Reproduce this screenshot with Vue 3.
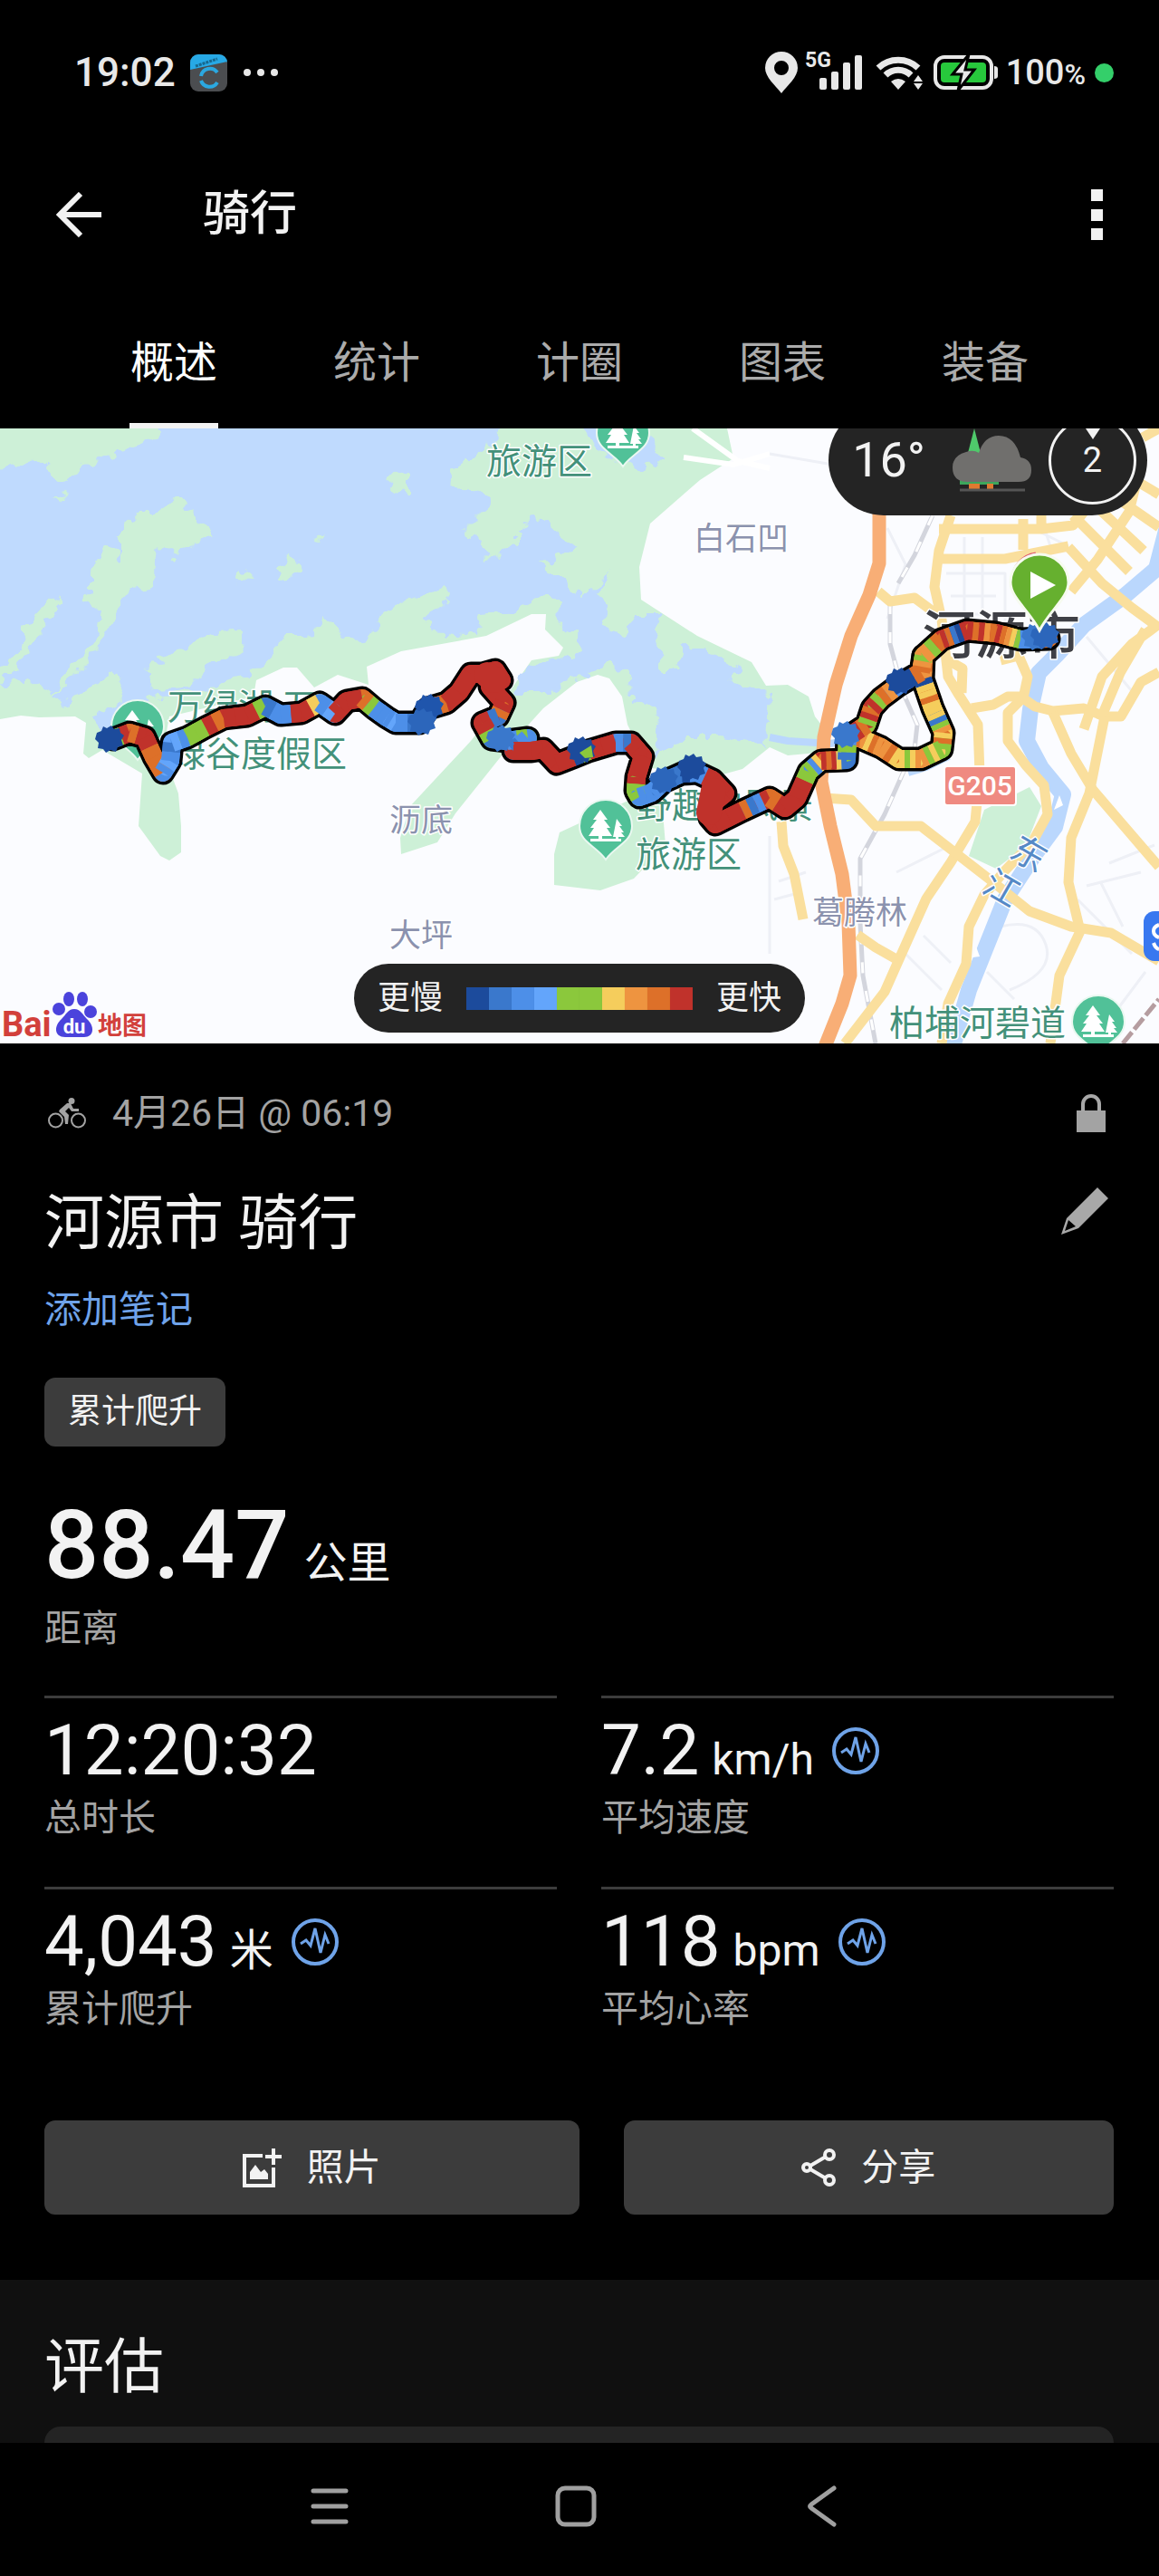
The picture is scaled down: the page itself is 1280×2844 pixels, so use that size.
<template>
  <div class="screen">
    <div class="status-bar">
      <span class="clock">19:02</span>
      <svg class="app-badge" viewBox="0 0 41 41" aria-hidden="true">
        <rect width="41" height="41" rx="9" fill="#4b4d50" />
        <path d="M0 17V9a9 9 0 0 1 9-9h23a9 9 0 0 1 9 9v-1z" fill="#27a9e6" />
        <path d="M6 13 30 5" stroke="#17688f" stroke-width="3" stroke-dasharray="3 1" />
        <path d="M30 20a10 10 0 0 0-18 4M12 29a10 10 0 0 0 18 2" fill="none" stroke="#2ba8e0" stroke-width="4" />
      </svg>
      <svg class="more-dots" viewBox="0 0 38 8" aria-hidden="true">
        <circle cx="4" cy="4" r="4" /><circle cx="19" cy="4" r="4" /><circle cx="34" cy="4" r="4" />
      </svg>
      <div class="status-icons">
        <svg class="icon-pin" viewBox="0 0 36 46" aria-hidden="true">
          <path fill-rule="evenodd" d="M18 0a18 18 0 0 1 18 18c0 10-11 19-18 28C11 37 0 28 0 18A18 18 0 0 1 18 0zm0 10a8 8 0 1 0 0 16 8 8 0 0 0 0-16z" />
        </svg>
        <svg class="icon-signal" viewBox="0 -8 66 60" aria-hidden="true">
          <text x="0" y="16" class="network">5G</text>
          <rect x="16" y="28" width="8" height="13" rx="2" /><rect x="29" y="21" width="8" height="20" rx="2" />
          <rect x="42" y="11" width="8" height="30" rx="2" /><rect x="55" y="3" width="8" height="38" rx="2" />
        </svg>
        <svg class="icon-wifi" viewBox="0 0 52 38" aria-hidden="true">
          <path d="M3 14a32 32 0 0 1 44 0M11 22a20 20 0 0 1 28 0" fill="none" stroke="#e8e8e8" stroke-width="7" />
          <path d="M25 38l-8-9q8-6 16 0zM47 22l5 7H42zM47 38l5-7H42z" />
        </svg>
        <svg class="icon-battery" viewBox="0 0 71 40" aria-hidden="true">
          <rect x="2" y="3" width="62" height="34" rx="10" fill="none" stroke="#e8e8e8" stroke-width="4" />
          <rect x="8" y="9" width="50" height="22" rx="4" fill="#27c93c" />
          <path d="M67 13q4 0 4 3v8q0 3-4 3z" />
          <path d="M39 0 21 22h10l-4 18 18-23H35z" stroke="#000" stroke-width="3" />
        </svg>
        <span class="charge">100<small>%</small></span>
        <span class="live-dot"></span>
      </div>
    </div>

    <header class="app-bar">
      <button class="icon-button" type="button" aria-label="返回">
        <svg class="arrow" viewBox="0 0 50 50"><path d="M27 2 4 25l23 23M4 25h46" fill="none" stroke="#f2f2f2" stroke-width="6" /></svg>
      </button>
      <h1>骑行</h1>
      <button class="icon-button menu" type="button" aria-label="菜单">
        <svg class="kebab" viewBox="0 0 13 56"><path d="M0 0h13v13H0zM0 22h13v13H0zM0 43h13v13H0z" /></svg>
      </button>
    </header>

    <nav class="tabs">
      <button
        v-for="tab in tabs"
        :key="tab"
        type="button"
        :class="['tab', { active: tab === activeTab }]"
        @click="activeTab = tab"
      ><span>{{ tab }}</span></button>
    </nav>

    <section class="map">
      <svg class="map-canvas" viewBox="0 0 1280 679" aria-hidden="true">
        <defs>
          <filter id="shore" x="-5%" y="-5%" width="110%" height="110%">
            <feTurbulence type="fractalNoise" baseFrequency="0.07" numOctaves="2" seed="4" />
            <feDisplacementMap in="SourceGraphic" scale="22" xChannelSelector="R" yChannelSelector="G" />
          </filter>
          <g id="trees">
            <path d="M-6-18l8 11h-4l7 9h-4l6 9H-19l6-9h-4l7-9h-4z" />
            <path d="M12-8l6 8h-3l5 7h-3l4 5H8z" />
            <path d="M-17 14h34v3h-34zM-8 10h4v5h-4zM11 10h3v5h-3z" />
          </g>
          <path id="drop" d="M0-29a29 29 0 0 1 29 29c0 18-19 22-29 37C-10 22-29 18-29 0A29 29 0 0 1 0-29z" />
        </defs>
        <rect width="1280" height="679" fill="#fbfcff" />

        <!-- land, reservoir and islands -->
        <path class="green" d="M0 0H803L810 33 773 57 718 105 706 153 708 189 770 229 830 258 846 284 870 283 893 296 900 318 907 327 903 358 870 361 850 352 820 376 787 385 720 375 700 341 693 327 687 296 673 276 660 272 637 280 600 309 563 350 503 425 483 457 443 470 442 452 453 417 520 345 563 290 587 256 617 251 622 242 602 222 603 205 587 205 537 229 443 246 405 263 407 283 373 272 347 286 328 264 313 264 283 278 280 296 187 318 182 345 187 376 197 403 200 439 200 468 187 477 177 472 153 439 157 381 113 355 98 364 92 359 95 325 83 318 43 319 23 317 0 321z" />
        <path class="green" d="M618 446 700 408 730 400 735 460 700 497 663 510 612 504 612 470z" />
        <g filter="url(#shore)">
          <path class="water" d="M-20 50 40 32 70 60 87 46 133 25 173 10 185-15H560L543 15 500 46 493 64 530 68 540 86 513 113 533 122 537 144 573 130 573 110 590 95 637 131 600 149 643 187 677 155 660 180 670 198 660 220 690 229 700 207 730 207 723 229 733 269 747 269 753 238 787 250 817 265 810 278 850 296 845 350 797 341 760 341 727 358 720 341 730 318 700 300 697 274 670 256 667 267 633 274 607 291 570 291 580 265 643 247 637 225 617 216 620 193 600 184 570 204 530 207 527 229 480 225 470 211 497 189 487 175 440 193 413 216 410 229 387 236 360 207 343 229 313 229 310 242 277 274 213 291 160 300 150 325 110 340 103 318 140 300 130 270 67 303 40 280-20 284z" />
          <path class="water" d="M640-10h50l30 25 10 24-25 5-45-20z" />
          <path class="green" d="M193 77 213 91 240 117 217 126 190 142 175 130 167 175 140 180 117 229 80 278 55 300 67 278 107 229 110 202 90 189 100 180 100 158 117 131 133 144 133 113 150 93 173 93z" />
          <path class="green" d="M63 180v18L43 229 17 265-10 290V270L13 251 33 216z" />
          <path class="green" d="M323 135 333 158 317 169 308 158zM343 124l12-6-4 8zM260 168l10-11 12 12zM425 55l28-8v26l-15-6zM63 73l10-4-3 8z" />
          <path class="green" d="M160 262 190 250 213 238 235 226 263 225 270 247 233 260 205 288 170 290z" />
        </g>
        <path d="M765 0 815 36 850 44M755 32l55 8 40-12" fill="none" stroke="#fff" stroke-width="6" />

        <!-- side streets -->
        <g class="lane">
          <path d="M850 28l70 12M980 110l20 40-20 60M1045 160h65v90M1050 185h50M1045 205h60M1065 120v100M1085 120v80M1200 505l60-15M1190 520l60 60M1215 500l25 50M860 500l30-10M855 520l30-8M1000 580l40 40M1020 560l30 30M1105 550q40-10 50 20t-40 50M1090 600l30 30M1235 640l30-40M990 490l60-30M850 450v130M1140 110l40 20M1140 70l20 60M1200 230l50 60M1225 480l50-20" />
        </g>
        <path class="green" d="M1137 396 1150 417 1133 461 1100 486 1070 472 1087 421z" />
        <g class="river">
          <path d="M1290 105 1277 155 1243 184 1197 217 1167 250 1147 270 1138 310 1134 345 1150 375 1174 404 1165 440 1140 474 1110 520 1090 570 1070 620 1050 690" />
          <path class="stream" d="M850 341 870 345 917 348 940 344M1003 380l20-6 25-12" />
        </g>
        <path d="M1170 405l-6 16 10-5zM1078 572l-4 12 8-1z" fill="#fff" />
        <g class="rail">
          <path d="M1030 96 1010 140 992 171M983 193V238L997 291 1013 327 1010 354 997 381 977 426 950 475V546L953 604 967 679" />
          <path class="ties" d="M1030 96 1010 140 992 171M983 193V238L997 291 1013 327 1010 354 997 381 977 426 950 475V546L953 604 967 679" />
        </g>
        <path d="M1240 679 1280 630" stroke="#b59da0" stroke-width="5" stroke-dasharray="16 4" />
        <g class="road">
          <path d="M1050 96 1037 135 1032 175 1040 211 1047 274 1057 291 1080 327 1082 381 1077 434 1050 479 1023 519 997 577 977 622 933 679" />
          <path d="M910 408 940 410 967 439 1017 439 1057 470 1097 501 1137 533 1183 550 1227 557 1280 588" />
          <path d="M970 180 983 191 1010 187 1037 207M1047 256 1063 265 1062 292M1105 256l20-5 10 23-5 24" />
          <path d="M1073 309 1097 305 1113 296 1127 296 1143 307 1163 312 1197 309 1220 318 1238 318 1260 280 1280 269" />
          <path d="M1163 314 1183 359 1207 399 1237 434 1280 484" />
          <path d="M1280 216 1250 238 1217 274 1197 332M1265 222l-28 48-22 52" />
          <path d="M1220 318 1203 403 1183 452 1180 501 1193 555 1170 604 1160 679" />
          <path d="M1127 300 1113 314V345L1133 372 1153 394 1157 426 1140 457 1110 488 1087 515 1070 550 1067 591 1047 635 1040 679" />
          <path d="M863 434 865 461 877 492 887 542M947 559 967 573 990 586" />
          <path d="M1037 111H1150L1185 107 1215 70 1250 52M1037 144H1110L1180 130M1130 100v34M1150 96v16" />
          <path d="M1185 96 1247 158M1200 76 1263 135M1215 64l65 45M1183 180 1212 145 1247 92 1255 60M1180 131 1217 171 1250 198 1280 220M1250 55l30 18M1262 10l18-10" />
        </g>
        <path class="highway" d="M971 60V149L960 184 940 229 923 283 910 341 907 390 917 439 930 492 937 546 939 604 930 635 908 690" />

        <!-- place names -->
        <g class="place park">
          <text x="537" y="50">旅游区</text>
          <text x="185" y="321">万绿湖-万</text>
          <text x="188" y="373">绿谷度假区</text>
          <text x="703" y="430">野趣沟风景</text>
          <text x="702" y="484">旅游区</text>
          <text x="982" y="670">柏埔河碧道</text>
        </g>
        <g class="place village">
          <text x="766" y="134">白石凹</text>
          <text x="430" y="445">沥底</text>
          <text x="430" y="572">大坪</text>
          <text x="897" y="547">葛腾林</text>
        </g>
        <text class="place city" x="1019" y="249">河源市</text>
        <g class="place stream-name">
          <text transform="translate(1137 470) rotate(30)" x="-20" y="14">东</text>
          <text transform="translate(1107 508) rotate(30)" x="-20" y="14">江</text>
        </g>
        <rect x="1043" y="373" width="79" height="43" rx="3" fill="#ef8a81" stroke="#fff" stroke-width="2" />
        <text class="road-sign" x="1082" y="405">G205</text>
        <rect x="1263" y="533" width="60" height="55" rx="12" fill="#3878f0" />
        <path d="M1280 548q-6 2-6 7t6 7M1274 568q2 6 6 7" fill="none" stroke="#fff" stroke-width="4" />

        <g v-for="poi in parks" :key="poi.x" :transform="`translate(${poi.x} ${poi.y})`">
          <use href="#drop" fill="#51c198" stroke="#e9f8f0" stroke-width="2" />
          <use href="#trees" fill="#fff" />
        </g>

        <!-- recorded track, coloured by speed: round joints first, crisp bands on top -->
        <g class="track">
          <polyline v-for="(line, i) in casings" :key="i" class="casing" :points="line" />
          <g v-for="layer in ['joints', 'bands']" :key="layer" :class="layer">
            <line
              v-for="(s, i) in segments"
              :key="i"
              :x1="s.x1" :y1="s.y1" :x2="s.x2" :y2="s.y2"
              :stroke="s.color"
            />
          </g>
        </g>
        <path d="M538 272l8 6M788 400l-5 24" fill="none" stroke="#c0322b" stroke-width="28" stroke-linecap="round" />
        <path
          v-for="stop in stops"
          :key="stop.x"
          :transform="`translate(${stop.x} ${stop.y})`"
          :fill="stop.color"
          d="M-14-7-9-9-7-14-3-12 2-15 5-11 11-12 12-7 16-4 13 1 15 7 9 9 7 14 1 12-4 15-7 11-13 10-12 4-16 0z"
        />
        <path d="M640 358l13-8 2 13-9 1z" fill="#8bc83c" />
        <path d="M1118 169a30 31 0 0 1 26-30" fill="none" stroke="#e0566b" stroke-width="5" />
        <path d="M1148 139a32 31 0 0 1 32 31c0 17-20 30-32 53-12-23-32-36-32-53a32 31 0 0 1 32-31z" fill="#66b02f" stroke="#f6fbef" stroke-width="3" />
        <path d="M1138 158v30l28-15z" fill="#fff" />

        <g class="provider">
          <text x="2" y="671" class="latin">Bai</text>
          <g fill="#4b43dc">
            <circle cx="65" cy="641" r="7" /><ellipse cx="76" cy="630" rx="6" ry="8" />
            <ellipse cx="91" cy="630" rx="6" ry="8" /><circle cx="100" cy="644" r="7" />
            <path d="M82 641c7 0 9 6 14 11 9 8 8 20-3 20H72c-12 0-13-12-4-20 5-5 7-11 14-11z" />
          </g>
          <text x="82" y="668" class="paw">du</text>
          <text x="108" y="669" class="hanzi">地图</text>
        </g>
      </svg>

      <div class="weather">
        <span class="temperature">16°</span>
        <svg class="cloud" viewBox="0 0 88 70" aria-hidden="true">
          <path d="M24 0 31 27H17z" fill="#4fc96b" />
          <path d="M8 56h43v6H8z" fill="#3da65c" /><path d="M18 61h12v6H18zM38 61h7v6h-7z" fill="#e07a30" />
          <path d="M15 26q8-3 14 1Q35 8 51 8q18 0 24 24 12 2 12 14 0 13-14 13H15Q0 58 0 43q0-13 15-17z" fill="#706f6d" />
          <path d="M8 68h72" stroke="#555" stroke-width="3" />
        </svg>
        <span class="wind">2</span>
      </div>

      <div class="legend">
        <span>更慢</span>
        <div class="scale">
          <i v-for="(color, i) in scale" :key="i" :style="{ background: color }"></i>
        </div>
        <span>更快</span>
      </div>
    </section>

    <main class="summary">
      <div class="meta">
        <svg class="icon-bike" viewBox="0 0 42 34" aria-hidden="true">
          <circle cx="8.5" cy="25" r="7.5" fill="none" stroke="#a3a3a3" stroke-width="2" />
          <circle cx="33.5" cy="25" r="7.5" fill="none" stroke="#a3a3a3" stroke-width="2" />
          <circle cx="26" cy="3.5" r="3.5" />
          <path d="M13 13 21 6h4l3 6h6v3h-8l-3-4-4 4 4 4-1 10h-3l-1-8-6-6z" />
        </svg>
        <span>4月26日 @ 06:19</span>
        <svg class="icon-lock" viewBox="0 0 32 42" aria-hidden="true">
          <path d="M0 18h32v24H0z" /><path d="M7 19v-8a9 9 0 0 1 18 0v8" fill="none" stroke="#a8a8a8" stroke-width="4" />
        </svg>
      </div>
      <div class="title-row">
        <h2>河源市 骑行</h2>
        <button class="icon-button" type="button" aria-label="编辑">
          <svg class="icon-pencil" viewBox="0 0 52 52">
            <path fill-rule="evenodd" d="M40 0 52 12 19 45 0 52 6 34zM8 36 4 48l12-5z" />
          </svg>
        </button>
      </div>
      <a class="add-note" href="#">添加笔记</a>
      <span class="chip">累计爬升</span>

      <div class="distance">
        <p><strong>88.47</strong><span>公里</span></p>
        <p class="label">距离</p>
      </div>

      <dl class="stats">
        <div v-for="stat in stats" :key="stat.label" class="stat">
          <dd>
            <span class="value">{{ stat.value }}</span>
            <span v-if="stat.unit" class="unit">{{ stat.unit }}</span>
            <svg v-if="stat.unit" class="icon-pulse" viewBox="0 0 52 52" aria-hidden="true">
              <circle cx="26" cy="26" r="24" fill="none" stroke="#6fa3e8" stroke-width="4" />
              <path d="M10 28l6-4 5 6 5-19 6 27 5-20 4 10" fill="none" stroke="#6fa3e8" stroke-width="3" />
            </svg>
          </dd>
          <dt>{{ stat.label }}</dt>
        </div>
      </dl>

      <div class="actions">
        <button type="button">
          <svg class="icon-photo" viewBox="0 0 43 43" aria-hidden="true">
            <path d="M22 8H2v33h32V21" fill="none" stroke="#f2f2f2" stroke-width="4" />
            <path d="M32 0h4v7h7v4h-7v7h-4v-7h-7V7h7zM8 34V26l6-8 6 8 4-3 4 5v6z" fill="#f2f2f2" />
          </svg>
          照片
        </button>
        <button type="button">
          <svg class="icon-share" viewBox="0 0 38 42" aria-hidden="true">
            <g fill="none" stroke="#f2f2f2" stroke-width="4">
              <circle cx="6" cy="21" r="4" /><circle cx="31" cy="7" r="5" /><circle cx="31" cy="35" r="5" />
              <path d="M10 19 27 9M10 23l17 10" />
            </g>
          </svg>
          分享
        </button>
      </div>
    </main>

    <section class="evaluation">
      <h2>评估</h2>
      <div class="card"></div>
    </section>

    <nav class="system-nav">
      <button class="icon-button" type="button" aria-label="最近任务">
        <svg viewBox="0 0 46 46"><path d="M5 6h36M5 23h36M5 40h36" /></svg>
      </button>
      <button class="icon-button" type="button" aria-label="主屏幕">
        <svg viewBox="0 0 46 46"><rect x="3" y="3" width="40" height="40" rx="8" /></svg>
      </button>
      <button class="icon-button" type="button" aria-label="后退">
        <svg viewBox="0 0 46 46"><path d="M36 3 11 21q-3 2 0 4l25 18" /></svg>
      </button>
    </nav>
  </div>
</template>

<script setup>
import { ref } from 'vue';

const tabs = ['概述', '统计', '计圈', '图表', '装备'];
const activeTab = ref('概述');

const stats = [
  { value: '12:20:32', unit: '', label: '总时长' },
  { value: '7.2', unit: 'km/h', label: '平均速度' },
  { value: '4,043', unit: '米', label: '累计爬升' },
  { value: '118', unit: 'bpm', label: '平均心率' }
];

const speed = {
  n: '#1c4b9c',
  b: '#3a78cc',
  l: '#4d8fe8',
  s: '#63a5fb',
  g: '#8bc83c',
  y: '#f5cd5c',
  a: '#ee9440',
  o: '#dd7029',
  r: '#c0322b'
};

const scale = [...'nblsggyaor'].map(code => speed[code]);

const parks = [
  { x: 688, y: 5 },
  { x: 152, y: 329 },
  { x: 669, y: 439 },
  { x: 1213, y: 655 }
];

const stops = [
  { x: 121, y: 343, color: '#1c4b9c' },
  { x: 474, y: 308, color: '#1f55ac' },
  { x: 466, y: 324, color: '#2c66bb' },
  { x: 553, y: 342, color: '#3a78cc' },
  { x: 642, y: 355, color: '#1c4b9c' },
  { x: 733, y: 388, color: '#2c66bb' },
  { x: 764, y: 374, color: '#1c4b9c' },
  { x: 994, y: 279, color: '#1c4b9c' },
  { x: 934, y: 338, color: '#3a78cc' },
  { x: 1144, y: 230, color: '#3a78cc' },
  { x: 1154, y: 229, color: '#2c66bb' }
];

// Each point carries the speed bands of the stretch that leads to it
const route = [
  [125, 343, ''], [143, 336, 'gr'], [160, 341, 'or'], [170, 363, 'ro'], [180, 380, 'oo'], [188, 367, 'ls'],
  [190, 347, 'lb'], [207, 341, 'sl'], [227, 330, 'gg'], [247, 320, 'ro'], [273, 317, 'rr'], [293, 307, 'rg'],
  [310, 316, 'bl'], [333, 314, 'lr'], [353, 303, 'ry'], [370, 315, 'ls'], [383, 301, 'rr'], [400, 298, 'r'],
  [413, 309, 'og'], [427, 319, 'll'], [437, 325, 'ls'], [463, 325, 'lb'], [473, 309, 'bn'], [493, 303, 'lo'],
  [507, 291, 'r'], [520, 271, 'r'], [533, 271, 'r'], [547, 267, 'r'], [554, 278, 'r'], [541, 285, 'r'],
  [557, 303, 'r'], [550, 318, 'ro'], [533, 325, 'br'], [543, 343, 'rg'], [560, 345, 'bl'], [583, 342, 'lg'],
  [567, 356, 'lb'], [587, 356, 'r'], [600, 354, 'r'], [615, 370, 'r'], [633, 363, 'r'], [650, 356, 'ng'],
  [680, 347, 'rr'], [697, 347, 'lb'], [710, 362, 'rr'], [703, 385, 'r'], [702, 400, 'rg'], [706, 407, 'g'],
  [720, 402, 'll'], [733, 390, 'lb'], [753, 381, 'lb'], [770, 380, 'nl'], [787, 388, 'lr'], [801, 403, 'r'],
  [786, 415, 'r'], [784, 430, 'r'], [790, 437, 'r'], [820, 422, 'rr'], [850, 408, 'oblr'], [867, 419, 'or'],
  [880, 408, 'r'], [893, 379, 'rrg'], [907, 367, 'gly'], [935, 366, 'roryb'], [936, 341, 'bgl'], [957, 327, 'lro'],
  [963, 309, 'gro'], [973, 298, 'rg'], [993, 283, 'oal'], [1017, 269, 'bno'], [1020, 251, 'oag'], [1040, 233, 'ago'],
  [1068, 223, 'robnr'], [1100, 226, 'rorao'], [1127, 233, 'roayg'], [1158, 232, 'llbo']
];

const loop = [
  [1020, 251, ''], [1019, 277, 'aoa'], [1030, 309, 'nyyoy'], [1042, 336, 'yybga'], [1040, 354, 'yog'],
  [1017, 365, 'gyga'], [993, 365, 'aygy'], [973, 352, 'yoa'], [950, 342, 'aoya'], [936, 341, 'oy']
];

const casings = [loop, route].map(points => points.map(([x, y]) => `${x},${y}`).join(' '));

function split(points) {
  const out = [];
  for (let i = 1; i < points.length; i++) {
    const [x0, y0] = points[i - 1];
    const [x1, y1, bands] = points[i];
    const n = bands.length;
    for (let k = 0; k < n; k++) {
      out.push({
        x1: x0 + ((x1 - x0) * k) / n,
        y1: y0 + ((y1 - y0) * k) / n,
        x2: x0 + ((x1 - x0) * (k + 1)) / n,
        y2: y0 + ((y1 - y0) * (k + 1)) / n,
        color: speed[bands[k]]
      });
    }
  }
  return out;
}

const segments = [...split(loop), ...split(route)];
</script>

<style>
body {
  margin: 0;
  background: #000;
}
</style>

<style scoped>
.screen {
  background: #000;
  color: #f2f2f2;
  font-family: Roboto, "Noto Sans CJK SC", sans-serif;
}

h1,
h2,
p,
dl,
dd {
  margin: 0;
}

svg {
  display: block;
}

button {
  font: inherit;
  color: inherit;
  border: 0;
  padding: 0;
}

.icon-button {
  background: none;
}

/* Status bar */
.status-bar {
  display: flex;
  align-items: center;
  padding: 56px 50px 55px 82px;
  line-height: 48px;
  fill: #e8e8e8;
  color: #e8e8e8;
}

.clock {
  font-size: 44px;
  font-weight: 500;
}

.app-badge {
  width: 41px;
  height: 41px;
  margin-left: 16px;
}

.more-dots {
  width: 38px;
  height: 8px;
  margin-left: 18px;
}

.status-icons {
  display: flex;
  align-items: center;
  margin-left: auto;
}

.icon-pin {
  width: 36px;
  height: 46px;
  margin-right: 8px;
}

.icon-signal {
  width: 66px;
  height: 60px;
  margin: -6px 12px -6px 0;
}

.network {
  font-size: 23px;
  font-weight: 700;
}

.icon-wifi {
  width: 52px;
  height: 38px;
  margin-right: 12px;
}

.icon-battery {
  width: 71px;
  height: 40px;
  margin-right: 9px;
}

.charge {
  margin-right: 10px;
  font-size: 38px;
  font-weight: 500;
}

.charge small {
  font-size: 32px;
  line-height: 1;
}

.live-dot {
  width: 21px;
  height: 21px;
  border-radius: 50%;
  background: #34cf6a;
}

/* App bar */
.app-bar {
  display: flex;
  align-items: center;
  padding: 48px 62px;
}

.arrow {
  width: 50px;
  height: 50px;
}

.app-bar h1 {
  margin-left: 112px;
  font-size: 52px;
  font-weight: 500;
  line-height: 60px;
}

.menu {
  margin-left: auto;
}

.kebab {
  width: 13px;
  height: 56px;
  fill: #f2f2f2;
}

/* Tabs */
.tabs {
  display: grid;
  grid-template-columns: repeat(5, 1fr);
  padding: 0 80px;
}

.tab {
  background: none;
  color: #ababab;
  font-size: 48px;
  line-height: 60px;
}

.tab span {
  display: inline-block;
  padding: 56px 1px 36px;
  border-bottom: 6px solid transparent;
  vertical-align: top;
}

.tab.active {
  color: #fff;
}

.tab.active span {
  border-color: #f2f2f2;
}

/* Map */
.map {
  position: relative;
  overflow: hidden;
}

.map-canvas {
  width: 100%;
  height: auto;
}

.green {
  fill: #cdf0d7;
}

.water {
  fill: #bfdafe;
}

.lane,
.river,
.rail,
.road,
.highway {
  fill: none;
  stroke-linejoin: round;
}

.lane {
  stroke: #eef0f6;
  stroke-width: 3;
}

.river {
  stroke: #bad7fd;
  stroke-width: 18;
}

.stream {
  stroke-width: 8;
}

.rail {
  stroke: #d3d5dd;
  stroke-width: 5;
}

.ties {
  stroke: #fff;
  stroke-width: 3;
  stroke-dasharray: 12 20;
}

.road {
  stroke: #fadf9d;
  stroke-width: 11;
}

.highway {
  stroke: #f8ae76;
  stroke-width: 15;
}

.place {
  paint-order: stroke;
  stroke: #fff;
  stroke-width: 3;
  stroke-linejoin: round;
}

.park {
  font-size: 39px;
  fill: #43917a;
}

.village {
  font-size: 35px;
  fill: #8b92ae;
}

.city {
  font-size: 58px;
  font-weight: 500;
  fill: #3f4046;
}

.stream-name {
  font-size: 39px;
  fill: #5689c6;
}

.road-sign {
  font-size: 30px;
  font-weight: 500;
  fill: #fff;
  text-anchor: middle;
}

.casing {
  fill: none;
  stroke: #000;
  stroke-width: 27;
  stroke-linejoin: round;
  stroke-linecap: round;
}

.joints,
.bands {
  stroke-width: 20;
}

.joints {
  stroke-linecap: round;
}

.provider {
  font-weight: 700;
  fill: #d2403b;
}

.latin {
  font-size: 38px;
}

.hanzi {
  font-size: 27px;
}

.paw {
  font-size: 22px;
  fill: #fff;
  text-anchor: middle;
}

.weather {
  position: absolute;
  top: -26px;
  right: 13px;
  display: flex;
  align-items: center;
  height: 122px;
  padding: 0 12px 0 26px;
  border-radius: 61px;
  background: #242424;
}

.temperature {
  font-size: 54px;
  line-height: 60px;
}

.cloud {
  width: 88px;
  height: 70px;
  margin: 0 18px 0 30px;
}

.wind {
  position: relative;
  width: 91px;
  height: 91px;
  border: 3px solid #f2f2f2;
  border-radius: 50%;
  font-size: 38px;
  line-height: 91px;
  text-align: center;
}

/* Wind direction marker on the dial */
.wind::before {
  content: "";
  position: absolute;
  top: 10px;
  left: 50%;
  margin-left: -8px;
  border: 8px solid transparent;
  border-top: 12px solid #f2f2f2;
  border-bottom: 0;
}

.legend {
  position: absolute;
  bottom: 12px;
  left: 50%;
  transform: translateX(-50%);
  display: flex;
  align-items: center;
  gap: 26px;
  padding: 14px 26px;
  border-radius: 38px;
  background: #242424;
  font-size: 36px;
  line-height: 48px;
  white-space: nowrap;
}

.scale {
  display: flex;
}

.scale i {
  width: 25px;
  height: 25px;
}

/* Activity summary */
.summary {
  display: flex;
  flex-direction: column;
  padding: 53px 50px 72px 49px;
}

.meta {
  display: flex;
  align-items: center;
  color: #a3a3a3;
  fill: #a3a3a3;
  font-size: 41px;
  line-height: 48px;
}

.icon-bike {
  width: 42px;
  height: 34px;
  margin: 0 29px 0 4px;
}

.icon-lock {
  width: 32px;
  height: 42px;
  margin: 0 9px 0 auto;
}

.title-row {
  display: flex;
  justify-content: space-between;
  margin-top: 58px;
}

.summary h2,
.evaluation h2 {
  font-size: 66px;
  font-weight: 400;
  line-height: 80px;
}

.title-row .icon-button {
  align-self: flex-start;
  margin-right: 6px;
}

.icon-pencil {
  width: 52px;
  height: 52px;
  fill: #a8a8a8;
}

.add-note {
  align-self: flex-start;
  margin-top: 31px;
  color: #6fa3ea;
  font-size: 41px;
  line-height: 48px;
  text-decoration: none;
}

.chip {
  align-self: flex-start;
  margin-top: 51px;
  padding: 14px 26px;
  border-radius: 12px;
  background: #3c3c3c;
  font-size: 37px;
  line-height: 48px;
}

.distance {
  margin-top: 53px;
}

.distance p:first-child {
  display: flex;
  align-items: baseline;
  gap: 16px;
  line-height: 112px;
}

.distance strong {
  font-size: 106px;
  font-weight: 500;
}

.distance span {
  font-size: 48px;
  line-height: 60px;
}

.label,
.stat dt {
  color: #a3a3a3;
  font-size: 41px;
  line-height: 48px;
}

.label {
  margin-top: 12px;
}

.stats {
  display: grid;
  grid-template-columns: 1fr 1fr;
  column-gap: 49px;
  margin-top: 50px;
}

.stat {
  display: flex;
  flex-direction: column;
  gap: 6px;
  padding: 14px 0 52px;
  border-top: 3px solid #3c3c3c;
}

.stat dd {
  display: flex;
  align-items: baseline;
  line-height: 88px;
}

.value {
  font-size: 78px;
}

.unit {
  margin-left: 14px;
  font-size: 48px;
  line-height: 60px;
}

.icon-pulse {
  align-self: center;
  width: 52px;
  height: 52px;
  margin-left: 20px;
}

.actions {
  display: grid;
  grid-template-columns: 12fr 11fr;
  gap: 49px;
  margin-top: 47px;
}

.actions button {
  display: flex;
  align-items: center;
  justify-content: center;
  gap: 28px;
  padding: 28px;
  border-radius: 12px;
  background: #3c3c3c;
  font-size: 41px;
  line-height: 48px;
}

.icon-photo {
  width: 43px;
  height: 43px;
}

.icon-share {
  width: 38px;
  height: 42px;
}

/* Evaluation */
.evaluation {
  padding: 57px 50px 0 49px;
  background: #101010;
}

.card {
  height: 18px;
  margin-top: 25px;
  border-radius: 24px 24px 0 0;
  background: #242424;
}

/* System navigation */
.system-nav {
  display: flex;
  justify-content: center;
  gap: 226px;
  padding: 47px 8px 53px 0;
}

.system-nav svg {
  width: 46px;
  height: 46px;
  fill: none;
  stroke: #a0a0a0;
  stroke-width: 5;
  stroke-linecap: round;
}
</style>
